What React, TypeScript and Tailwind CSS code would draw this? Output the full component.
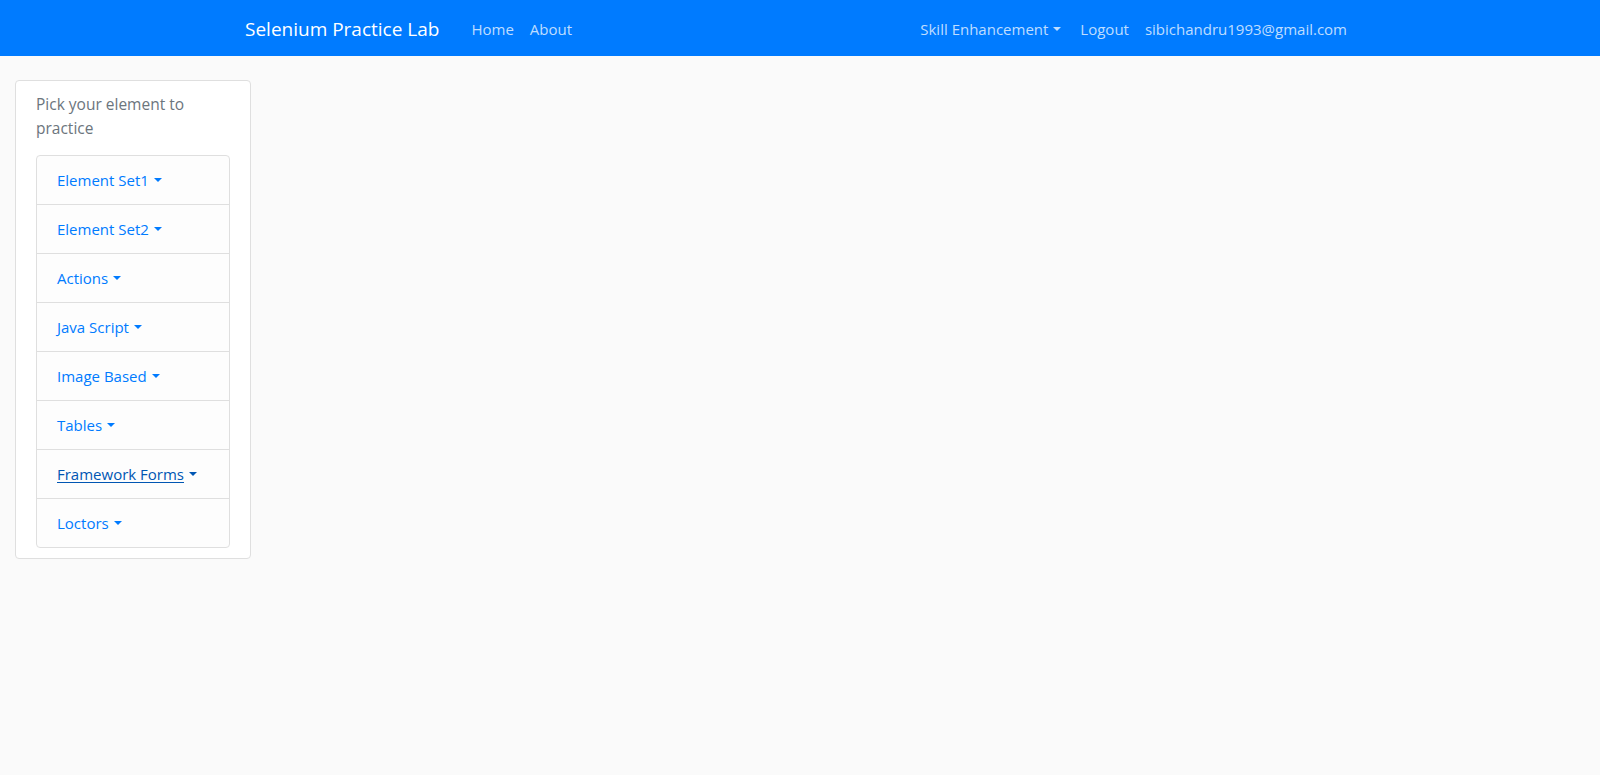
import React from "react";

const items = [
  "Element Set1",
  "Element Set2",
  "Actions",
  "Java Script",
  "Image Based",
  "Tables",
  "Framework Forms",
  "Loctors",
];

function Caret() {
  return (
    <span className="inline-block ml-[5px] align-[4px] w-0 h-0 border-t-[4px] border-t-current border-x-[4px] border-x-transparent" />
  );
}

export default function App() {
  return (
    <div
      className="min-h-[775px] bg-[#fafafa] text-[15px] leading-6"
      style={{ fontFamily: '"Open Sans", "Noto Sans", sans-serif' }}
    >
      <nav className="h-14 bg-[#007bff] flex items-center justify-between pl-[237px] pr-[245px] pt-[2px]">
        <div className="flex items-center">
          <span className="text-white text-[19px] leading-[30px] ml-2 mr-[24px]">Selenium Practice Lab</span>
          <a className="px-2 text-white/75">Home</a>
          <a className="px-2 text-white/75">About</a>
        </div>
        <div className="flex items-center">
          <a className="px-2 text-white/75 mr-[3px]">
            Skill Enhancement
            <Caret />
          </a>
          <a className="px-2 text-white/75">Logout</a>
          <a className="px-2 text-white/75">sibichandru1993@gmail.com</a>
        </div>
      </nav>
      <div className="pt-6 pl-[15px]">
        <div className="w-[236px] bg-white border border-[#dfdfdf] rounded px-5 pt-[11px] pb-[10px]">
          <p className="text-[#6c757d] text-[15.5px] mb-[15px]">Pick your element to practice</p>
          <div className="border border-[#dfdfdf] rounded bg-[#fdfdfd]">
            {items.map((it, i) => (
              <div
                key={it}
                className={`px-5 py-3 ${i > 0 ? "border-t border-[#dfdfdf]" : ""}`}
              >
                {it === "Framework Forms" ? (
                  <span className="text-[#0056b3]">
                    <span className="underline underline-offset-2">{it}</span>
                    <Caret />
                  </span>
                ) : (
                  <span className="text-[#007bff]">
                    {it}
                    <Caret />
                  </span>
                )}
              </div>
            ))}
          </div>
        </div>
      </div>
    </div>
  );
}
